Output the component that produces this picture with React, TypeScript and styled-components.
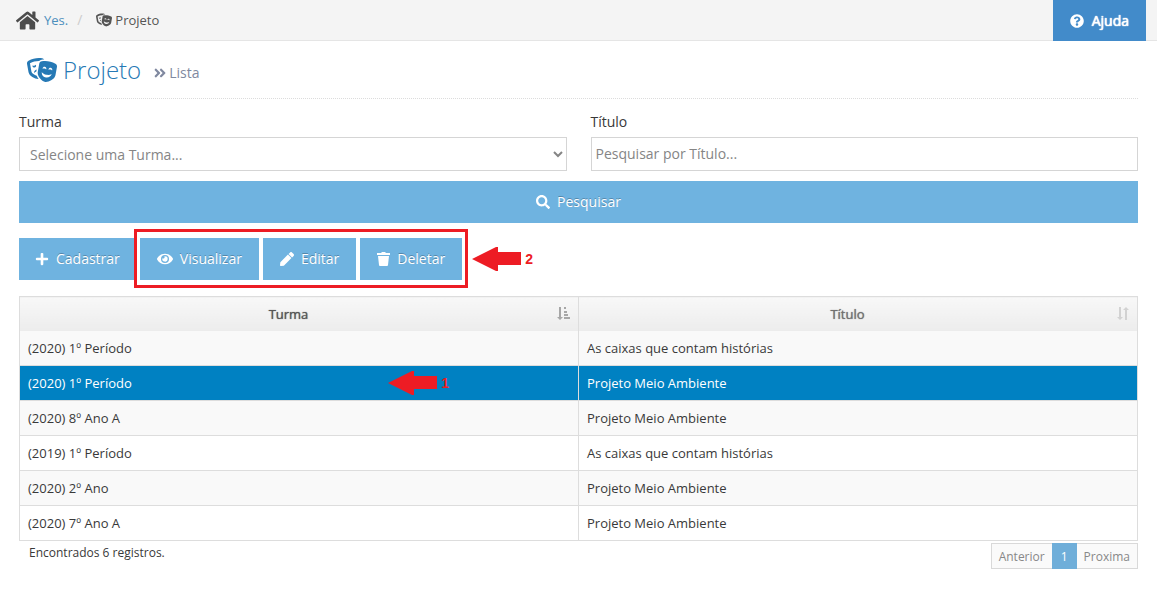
import React from 'react';
import styled, { createGlobalStyle } from 'styled-components';
import {
  FaAngleDoubleRight,
  FaEye,
  FaHome,
  FaPen,
  FaPlus,
  FaQuestionCircle,
  FaSearch,
  FaTheaterMasks,
} from 'react-icons/fa';

const GlobalStyle = createGlobalStyle`
  *, *::before, *::after { box-sizing: border-box; }
  body {
    margin: 0;
    background: #fff;
    color: #393939;
    font: 14px/20px "Open Sans", "Liberation Sans", sans-serif;
  }
  button, input, select { font: inherit; border-radius: 0; }
`;

const TopBar = styled.header`
  display: flex;
  justify-content: space-between;
  height: 41px;
  padding: 0 11px 0 16px;
  background: #f4f4f4;
  border-bottom: 1px solid #e5e5e5;
`;

const Breadcrumb = styled.nav`
  display: flex;
  align-items: center;
  color: #4c4c4c;
`;

const Crumb = styled.span`
  display: flex;
  align-items: center;
  gap: 3px;
  font-size: 13px;
  color: #555;
`;

const CrumbLink = styled.a`
  display: flex;
  align-items: center;
  gap: 5px;
  font-size: 13px;
  color: #4c8fbd;
  text-decoration: none;
  svg { color: #4c4c4c; }
`;

const Separator = styled.span`
  padding: 0 14px 0 9px;
  color: #ccc;
`;

const HelpButton = styled.button`
  display: flex;
  align-items: center;
  gap: 8px;
  height: 41px;
  padding: 0 17px;
  border: 0;
  background: #428bca;
  color: #fff;
  text-shadow: 0 0 1px #fff, 0 0 1px #fff;
`;

const Content = styled.main`
  padding: 0 19px;
`;

const PageHeader = styled.div`
  display: flex;
  align-items: center;
  height: 58px;
  padding: 0 8px;
  border-bottom: 1px dotted #dcdcdc;
`;

const Title = styled.h1`
  display: flex;
  align-items: center;
  gap: 6px;
  margin: 0;
  font-size: 24px;
  line-height: 32px;
  font-weight: 300;
  color: #2679b5;
`;

const Subtitle = styled.small`
  display: flex;
  align-items: center;
  gap: 2px;
  padding: 6px 0 0 12px;
  font-size: 14px;
  color: #8089a0;
`;

const Filters = styled.form`
  display: grid;
  grid-template-columns: 1fr 1fr;
  gap: 10px 24px;
  padding-top: 13px;
`;

const Field = styled.label`
  display: flex;
  flex-direction: column;
  gap: 5px;
`;

const Select = styled.select`
  width: 100%;
  height: 34px;
  padding: 1px 6px;
  border: 1px solid #d5d5d5;
  background: #fff;
  color: #858585;
`;

const TextInput = styled.input`
  width: 100%;
  height: 34px;
  padding: 0 4px 1px;
  border: 1px solid #d5d5d5;
  background: #fff;
  &::placeholder { color: #858585; }
`;

const Button = styled.button<{ $wide?: boolean }>`
  display: flex;
  align-items: center;
  justify-content: center;
  gap: 7px;
  height: 42px;
  padding: 0 16px;
  border: 0;
  background: #6fb3e0;
  color: #fff;
  text-shadow: 0 -1px 0 rgba(0, 0, 0, 0.25);
  grid-column: ${(p) => (p.$wide ? '1 / -1' : 'auto')};
`;

const Actions = styled.div`
  display: flex;
  gap: 4px;
  padding: 15px 0 16px;
`;

const MarkedGroup = styled.div`
  position: relative;
  display: flex;
  gap: 4px;
  ${Button} { padding: 0 17px; }
  &::after {
    content: '';
    position: absolute;
    inset: -9px -6px -8px;
    border: 3px solid #ed1c24;
    pointer-events: none;
  }
`;

const Callout = styled.span<{ $left: string; $top: number }>`
  position: absolute;
  left: ${(p) => p.$left};
  top: ${(p) => p.$top}px;
  display: flex;
  align-items: center;
  gap: 4px;
  color: #ed1c24;
  font: bold 14px/24px "Liberation Sans", Arial, sans-serif;
`;

const Table = styled.table`
  width: 100%;
  table-layout: fixed;
  border-collapse: collapse;
  font-size: 13px;
`;

const HeadCell = styled.th<{ $active?: boolean }>`
  position: relative;
  height: 34px;
  padding: 0 29px 0 8px;
  border: 1px solid #ddd;
  border-bottom: 0;
  background: linear-gradient(#f8f8f8, #ececec);
  color: ${(p) => (p.$active ? '#555' : '#707070')};
  font-weight: 400;
  text-shadow: 0 0 1px currentColor;
`;

const SortMark = styled.svg`
  position: absolute;
  right: 8px;
  top: 10px;
`;

const Row = styled.tr<{ $selected: boolean }>`
  &:nth-child(odd) { background: #f9f9f9; }
  && {
    ${(p) => p.$selected && 'background: #0081c2; color: #fff;'}
  }
`;

const Cell = styled.td`
  position: relative;
  height: 35px;
  padding: 0 8px;
  border: 1px solid #ddd;
`;

const TableBody = styled.tbody`
  tr:first-child td { border-top: 0; }
`;

const Footer = styled.footer`
  display: flex;
  justify-content: space-between;
  padding: 2px 0 20px 10px;
  font-size: 12px;
`;

const Pager = styled.nav`
  display: flex;
`;

const PageLink = styled.a<{ $current?: boolean }>`
  height: 26px;
  padding: 3px ${(p) => (p.$current ? 8 : 7)}px;
  border: 1px solid ${(p) => (p.$current ? '#6faed9' : '#d9d9d9')};
  background: ${(p) => (p.$current ? '#6faed9' : '#fafafa')};
  color: ${(p) => (p.$current ? '#fff' : '#888')};
  text-decoration: none;
  &:first-child { border-right: 0; }
  &:last-child { border-left: 0; }
`;

function Arrow() {
  return (
    <svg width="49" height="24" viewBox="0 0 49 24" fill="#ed1c24" aria-hidden="true">
      <path d="M0 12 24 0h2v5h23v13H26v6h-2Z" />
    </svg>
  );
}

function TrashIcon() {
  return (
    <svg width="13" height="14" viewBox="0 0 13 14" fill="currentColor" aria-hidden="true">
      <path d="M0 1h4l1-1h3l1 1h4v2H0ZM1 4h11l-1 9q0 1-1 1H3q-1 0-1-1Z" />
    </svg>
  );
}

function SortedIcon() {
  return (
    <SortMark width="13" height="14" viewBox="0 0 13 14" fill="#a6a6a6" aria-hidden="true">
      <path d="M2 0h2v10h2L3 13 0 10h2ZM7 0h2v2H7ZM7 4h3v2H7ZM7 7h4v2H7ZM7 10h6v2H7Z" />
    </SortMark>
  );
}

function UnsortedIcon() {
  return (
    <SortMark width="12" height="14" viewBox="0 0 12 14" fill="#d2d2d2" aria-hidden="true">
      <path d="M2 0h2v10h2L3 13 0 10h2ZM8 13h2V3h2L9 0 6 3h2Z" />
    </SortMark>
  );
}

const rows = [
  { turma: '(2020) 1º Período', titulo: 'As caixas que contam histórias' },
  { turma: '(2020) 1º Período', titulo: 'Projeto Meio Ambiente', selected: true },
  { turma: '(2020) 8º Ano A', titulo: 'Projeto Meio Ambiente' },
  { turma: '(2019) 1º Período', titulo: 'As caixas que contam histórias' },
  { turma: '(2020) 2º Ano', titulo: 'Projeto Meio Ambiente' },
  { turma: '(2020) 7º Ano A', titulo: 'Projeto Meio Ambiente' },
];

export default function App() {
  return (
    <>
      <GlobalStyle />
      <TopBar>
        <Breadcrumb>
          <CrumbLink href="#"><FaHome size={23} />Yes.</CrumbLink>
          <Separator>/</Separator>
          <Crumb><FaTheaterMasks size={16} />Projeto</Crumb>
        </Breadcrumb>
        <HelpButton type="button"><FaQuestionCircle size={14} />Ajuda</HelpButton>
      </TopBar>
      <Content>
        <PageHeader>
          <Title><FaTheaterMasks size={30} />Projeto</Title>
          <Subtitle><FaAngleDoubleRight size={14} />Lista</Subtitle>
        </PageHeader>
        <Filters onSubmit={(e) => e.preventDefault()}>
          <Field>
            Turma
            <Select defaultValue="">
              <option value="">Selecione uma Turma...</option>
            </Select>
          </Field>
          <Field>
            Título
            <TextInput type="text" placeholder="Pesquisar por Título..." />
          </Field>
          <Button type="submit" $wide><FaSearch size={14} />Pesquisar</Button>
        </Filters>
        <Actions>
          <Button type="button"><FaPlus size={14} />Cadastrar</Button>
          <MarkedGroup>
            <Button type="button"><FaEye size={16} />Visualizar</Button>
            <Button type="button"><FaPen size={14} />Editar</Button>
            <Button type="button"><TrashIcon />Deletar</Button>
            <Callout $left="calc(100% + 10px)" $top={9}><Arrow />2</Callout>
          </MarkedGroup>
        </Actions>
        <Table>
          <thead>
            <tr>
              <HeadCell $active>Turma<SortedIcon /></HeadCell>
              <HeadCell>Título<UnsortedIcon /></HeadCell>
            </tr>
          </thead>
          <TableBody>
            {rows.map((row, i) => (
              <Row key={i} $selected={Boolean(row.selected)}>
                <Cell>
                  {row.turma}
                  {row.selected && <Callout $left="66%" $top={5}><Arrow />1</Callout>}
                </Cell>
                <Cell>{row.titulo}</Cell>
              </Row>
            ))}
          </TableBody>
        </Table>
        <Footer>
          <span>Encontrados 6 registros.</span>
          <Pager>
            <PageLink href="#">Anterior</PageLink>
            <PageLink href="#" $current>1</PageLink>
            <PageLink href="#">Proxima</PageLink>
          </Pager>
        </Footer>
      </Content>
    </>
  );
}
